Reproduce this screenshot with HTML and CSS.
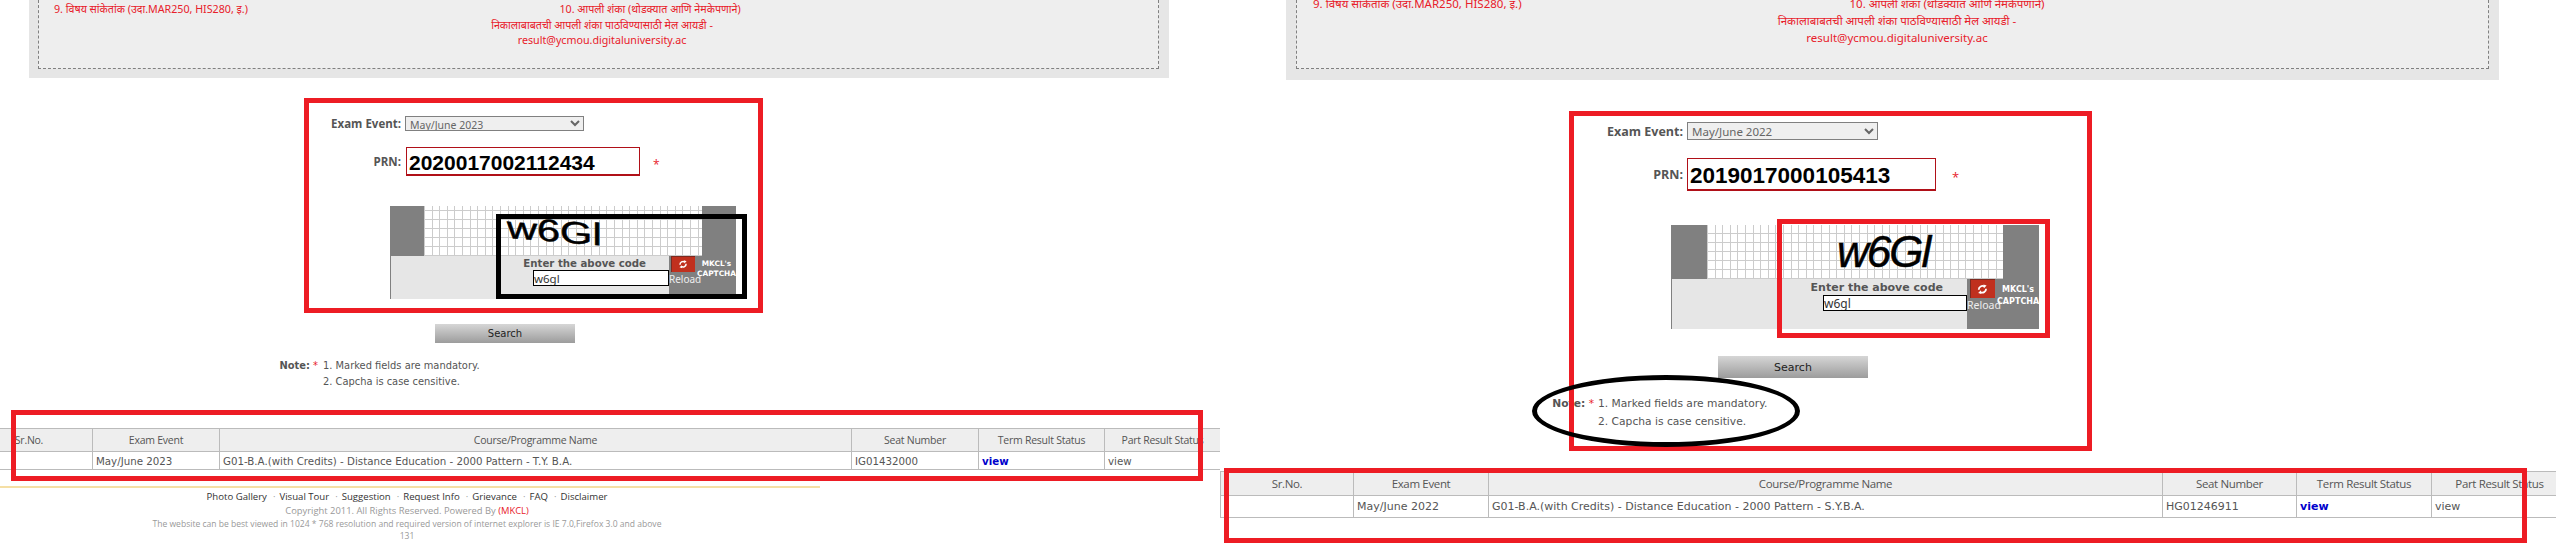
FILE: index.html
```html
<!DOCTYPE html>
<html lang="en">

<head>
    <meta charset="UTF-8">
    <meta name="viewport" content="width=device-width, initial-scale=1.0">
    <title>Exam Result Search</title>
    <link rel="stylesheet" href="styles.css">
</head>

<body>
    <!-- First screenshot -->
    <div class="shot shot-left">
        <div class="notice">
            <div class="notice-inner">
                <div class="notice-a">9. विषय सांकेतांक (उदा.MAR250, HIS280, इ.)</div>
                <div class="notice-b">
                    <div class="shift">10. आपली शंका (थोडक्यात आणि नेमकेपणाने)</div>
                    <div>निकालाबाबतची आपली शंका पाठविण्यासाठी मेल आयडी -</div>
                    <div>result@ycmou.digitaluniversity.ac</div>
                </div>
            </div>
        </div>

        <form class="search-form">
            <div class="form-row row-event">
                <label class="form-label">Exam Event:</label>
                <select class="event-select"><option>May/June 2023</option></select>
            </div>
            <div class="form-row row-prn">
                <label class="form-label label-prn">PRN:</label>
                <input class="prn-input" type="text" value="2020017002112434">
                <span class="star">*</span>
            </div>

            <div class="captcha">
                <div class="captcha-top">
                    <div class="captcha-side"></div>
                    <div class="captcha-grid"><span class="captcha-word">w6Gl</span></div>
                    <div class="captcha-side"></div>
                </div>
                <div class="captcha-bottom">
                    <div class="captcha-entry">
                        <div class="captcha-title">Enter the above code</div>
                        <input class="captcha-input" type="text" value="w6gl">
                    </div>
                    <div class="captcha-brand">
                        <div class="reload">
                            <div class="reload-icon">
                                <svg viewBox="0 0 24 24"><path d="M5 13a7 7 0 0 1 11-6" /><path d="M19 11a7 7 0 0 1-11 6" /><polygon points="14,3 20,5 15,10" /><polygon points="10,21 4,19 9,14" /></svg>
                            </div>
                            <div class="reload-text">Reload</div>
                        </div>
                        <div class="brand-text">
                            <div>MKCL's</div>
                            <div>CAPTCHA</div>
                        </div>
                    </div>
                </div>
            </div>

            <button class="search-btn" type="button">Search</button>

            <div class="note">
                <div class="note-head"><b>Note:</b> <span class="star">*</span></div>
                <div>
                    <div>1. Marked fields are mandatory.</div>
                    <div>2. Capcha is case censitive.</div>
                </div>
            </div>
        </form>

        <table class="result-table">
            <colgroup>
                <col class="col-sr"><col class="col-event"><col class="col-course"><col class="col-seat"><col class="col-term"><col class="col-part">
            </colgroup>
            <tr>
                <th>Sr.No.</th>
                <th>Exam Event</th>
                <th>Course/Programme Name</th>
                <th>Seat Number</th>
                <th>Term Result Status</th>
                <th>Part Result Status</th>
            </tr>
            <tr>
                <td></td>
                <td>May/June 2023</td>
                <td>G01-B.A.(with Credits) - Distance Education - 2000 Pattern - T.Y. B.A.</td>
                <td>IG01432000</td>
                <td><a class="view-link" href="#">view</a></td>
                <td>view</td>
            </tr>
        </table>

        <div class="footer">
            <div class="footer-rule"></div>
            <ul class="footer-links">
                <li>Photo Gallery</li>
                <li>Visual Tour</li>
                <li>Suggestion</li>
                <li>Request Info</li>
                <li>Grievance</li>
                <li>FAQ</li>
                <li>Disclaimer</li>
            </ul>
            <div class="footer-line footer-copy">Copyright 2011. All Rights Reserved. Powered By <span class="mkcl">(MKCL)</span></div>
            <div class="footer-line">The website can be best viewed in 1024 * 768 resolution and required version of internet explorer is IE 7.0,Firefox 3.0 and above</div>
            <div class="footer-line">131</div>
        </div>

        <!-- hand drawn marks -->
        <div class="mark mark-form"></div>
        <div class="mark mark-captcha"></div>
        <div class="mark mark-table"></div>
    </div>

    <!-- Second screenshot -->
    <div class="shot shot-right">
        <div class="notice">
            <div class="notice-inner">
                <div class="notice-a">9. विषय सांकेतांक (उदा.MAR250, HIS280, इ.)</div>
                <div class="notice-b">
                    <div class="shift">10. आपली शंका (थोडक्यात आणि नेमकेपणाने)</div>
                    <div>निकालाबाबतची आपली शंका पाठविण्यासाठी मेल आयडी -</div>
                    <div>result@ycmou.digitaluniversity.ac</div>
                </div>
            </div>
        </div>

        <form class="search-form">
            <div class="form-row row-event">
                <label class="form-label">Exam Event:</label>
                <select class="event-select"><option>May/June 2022</option></select>
            </div>
            <div class="form-row row-prn">
                <label class="form-label label-prn">PRN:</label>
                <input class="prn-input" type="text" value="2019017000105413">
                <span class="star">*</span>
            </div>

            <div class="captcha">
                <div class="captcha-top">
                    <div class="captcha-side"></div>
                    <div class="captcha-grid"><span class="captcha-word">w6Gl</span></div>
                    <div class="captcha-side"></div>
                </div>
                <div class="captcha-bottom">
                    <div class="captcha-entry">
                        <div class="captcha-title">Enter the above code</div>
                        <input class="captcha-input" type="text" value="w6gl">
                    </div>
                    <div class="captcha-brand">
                        <div class="reload">
                            <div class="reload-icon">
                                <svg viewBox="0 0 24 24"><path d="M5 13a7 7 0 0 1 11-6" /><path d="M19 11a7 7 0 0 1-11 6" /><polygon points="14,3 20,5 15,10" /><polygon points="10,21 4,19 9,14" /></svg>
                            </div>
                            <div class="reload-text">Reload</div>
                        </div>
                        <div class="brand-text">
                            <div>MKCL's</div>
                            <div>CAPTCHA</div>
                        </div>
                    </div>
                </div>
            </div>

            <button class="search-btn" type="button">Search</button>

            <div class="note">
                <div class="note-head"><b>Note:</b> <span class="star">*</span></div>
                <div>
                    <div>1. Marked fields are mandatory.</div>
                    <div>2. Capcha is case censitive.</div>
                </div>
            </div>
        </form>

        <table class="result-table">
            <colgroup>
                <col class="col-sr"><col class="col-event"><col class="col-course"><col class="col-seat"><col class="col-term"><col class="col-part">
            </colgroup>
            <tr>
                <th>Sr.No.</th>
                <th>Exam Event</th>
                <th>Course/Programme Name</th>
                <th>Seat Number</th>
                <th>Term Result Status</th>
                <th>Part Result Status</th>
            </tr>
            <tr>
                <td></td>
                <td>May/June 2022</td>
                <td>G01-B.A.(with Credits) - Distance Education - 2000 Pattern - S.Y.B.A.</td>
                <td>HG01246911</td>
                <td><a class="view-link" href="#">view</a></td>
                <td>view</td>
            </tr>
        </table>

        <!-- hand drawn marks -->
        <div class="mark mark-form"></div>
        <div class="mark mark-captcha"></div>
        <div class="mark mark-table"></div>
        <div class="mark mark-ellipse"></div>
    </div>
</body>

</html>
```

FILE: styles.css
```css
body {
    margin: 0;
    height: 549px;
    overflow: hidden;
    background-color: white;
    color: #555;
    font-family: "Open Sans", "Noto Sans", sans-serif;
    display: flex;
}

.shot {
    position: relative;
    flex: none;
    height: 549px;
    overflow: hidden;
}

.shot-left {
    width: 1220px;
}

.shot-right {
    width: 1336px;
}

/* Grey notice panel */
.notice {
    background: #e6e6e6;
    box-sizing: border-box;
    overflow: hidden;
}

.notice-inner {
    display: flex;
    box-sizing: border-box;
    background: #eeeeee;
    border: 1px dashed #808080;
    border-top: none;
    color: #e8202a;
    font-family: "Noto Sans", "Open Sans", sans-serif;
}

.notice-b {
    width: 400px;
    text-align: center;
}

.shot-left .notice {
    width: 1140px;
    height: 78px;
    margin-left: 29px;
    padding: 0 10px 9px 9px;
}

.shot-left .notice-inner {
    height: 69px;
    font-size: 10.7px;
    line-height: 15.5px;
    padding-top: 2px;
}

.shot-left .notice-a {
    width: 348px;
    padding-left: 15px;
}

.shot-left .shift {
    margin-left: 96px;
}

.shot-right .notice {
    width: 1213px;
    height: 80px;
    margin-left: 66px;
    padding: 0 10px 11px 10px;
}

.shot-right .notice-inner {
    height: 69px;
    font-size: 11.5px;
    line-height: 17px;
}

.shot-right .notice-a {
    width: 384px;
    padding-left: 16px;
    margin-top: -5px;
}

.shot-right .notice-b {
    margin-top: -5px;
}

.shot-right .shift {
    margin-left: 100px;
}

/* Search form */
.form-row {
    display: flex;
    align-items: center;
}

.form-label {
    font-weight: bold;
    text-align: right;
    box-sizing: border-box;
}

.event-select {
    box-sizing: border-box;
    padding: 0;
    background: #efefef;
    border: 1px solid #808080;
    color: #666;
    font-family: "Noto Sans", sans-serif;
}

.prn-input {
    box-sizing: border-box;
    padding: 3px 2px 0;
    border: 1px solid #b01018;
    border-bottom-width: 2px;
    color: black;
    font-family: "Liberation Sans", sans-serif;
    font-weight: bold;
    outline: none;
}

.star {
    color: #e8202a;
}

.row-prn .star {
    margin-top: 5px;
}

.captcha-top {
    display: flex;
}

.captcha-side {
    background: #808080;
    flex: none;
}

.captcha-grid {
    flex: 1;
    display: flex;
    align-items: center;
    overflow: hidden;
    background-color: white;
    background-image:
        repeating-linear-gradient(90deg, #cccccc 0, #cccccc 1px, transparent 1px, transparent 7.6px),
        repeating-linear-gradient(0deg, #cccccc 0, #cccccc 1px, transparent 1px, transparent 9px);
}

.captcha-word {
    display: inline-block;
    color: black;
    font-family: "Liberation Sans", sans-serif;
    line-height: 1;
    -webkit-text-stroke: 0.5px black;
}

.captcha-bottom {
    display: flex;
    background: #e6e6e6;
    border-left: 1px solid #808080;
}

.captcha-entry {
    flex: 1;
    display: flex;
    flex-direction: column;
    align-items: flex-end;
}

.captcha-title {
    font-family: "DejaVu Sans", sans-serif;
    font-weight: bold;
    white-space: nowrap;
}

.captcha-input {
    box-sizing: border-box;
    padding: 0;
    border: 1px solid black;
    color: #333;
    font-family: "Noto Sans", sans-serif;
    outline: none;
}

.captcha-brand {
    display: flex;
    flex: none;
    background: #808080;
    color: white;
}

.reload {
    text-align: center;
}

.reload-icon {
    margin: 0 auto;
    background: #c0301e;
    display: flex;
    align-items: center;
    justify-content: center;
    box-sizing: border-box;
    border-left: 1px solid #7c2a20;
    border-top: 1px solid #7c2a20;
}

.reload-icon svg {
    width: 70%;
    height: 70%;
    fill: white;
}

.reload-icon path {
    fill: none;
    stroke: white;
    stroke-width: 3.4;
}

.reload-text {
    color: #eeeeee;
    font-family: "Noto Sans", sans-serif;
    white-space: nowrap;
}

.brand-text {
    flex: 1;
    text-align: center;
    font-family: "DejaVu Sans", sans-serif;
    font-weight: bold;
    white-space: nowrap;
}

.search-btn {
    display: block;
    padding: 0;
    border: none;
    color: #222;
    background: linear-gradient(#d6d6d6, #9c9c9c);
    font-family: "DejaVu Sans", sans-serif;
}

.note {
    display: flex;
    font-family: "DejaVu Sans", sans-serif;
}

.note-head {
    text-align: right;
    white-space: nowrap;
}

/* Left screenshot form sizes */
.shot-left .search-form {
    padding-top: 38px;
}

.shot-left .row-event {
    height: 15px;
}

.shot-left .form-label {
    width: 403px;
    font-size: 11.5px;
    padding-right: 2px;
}

.shot-left .event-select {
    width: 179px;
    height: 15px;
    margin-left: 2px;
    font-size: 10.5px;
}

.shot-left .row-prn {
    height: 29px;
    margin-top: 16px;
}

.shot-left .prn-input {
    width: 234px;
    height: 29px;
    margin-left: 3px;
    font-size: 21px;
}

.shot-left .row-prn .star {
    margin-left: 13px;
    font-size: 12px;
}

.shot-left .captcha {
    width: 346px;
    margin: 30px 0 0 390px;
}

.shot-left .captcha-top {
    height: 50px;
}

.shot-left .captcha-side {
    width: 34px;
}

.shot-left .captcha-word {
    padding-left: 83px;
    font-size: 31px;
    transform: translateY(-4px) scaleX(1.34) skewY(6deg);
    transform-origin: 83px 50%;
}

.shot-left .captcha-bottom {
    height: 43px;
}

.shot-left .captcha-entry {
    padding-top: 1px;
}

.shot-left .captcha-title {
    font-size: 10.2px;
    margin-right: 23px;
    line-height: 13px;
}

.shot-left .captcha-input {
    width: 136px;
    height: 16px;
    font-size: 11.5px;
}

.shot-left .captcha-brand {
    width: 67px;
}

.shot-left .reload {
    width: 28px;
}

.shot-left .reload-icon {
    width: 24px;
    height: 16px;
}

.shot-left .reload-text {
    font-size: 10px;
    line-height: 14px;
}

.shot-left .brand-text {
    font-size: 7.4px;
    line-height: 10px;
    padding-top: 3px;
}

.shot-left .search-btn {
    width: 140px;
    height: 19px;
    margin: 25px 0 0 435px;
    font-size: 10px;
}

.shot-left .note {
    margin: 15px 0 0 0;
    font-size: 9.9px;
    line-height: 16px;
}

.shot-left .note-head {
    width: 318px;
    margin-right: 5px;
}

/* Right screenshot form sizes */
.shot-right .search-form {
    padding-top: 42px;
}

.shot-right .row-event {
    height: 18px;
}

.shot-right .form-label {
    width: 465px;
    font-size: 12.5px;
    padding-right: 2px;
}

.shot-right .event-select {
    width: 191px;
    height: 18px;
    margin-left: 2px;
    font-size: 11.5px;
}

.shot-right .row-prn {
    height: 33px;
    margin-top: 18px;
}

.shot-right .prn-input {
    width: 249px;
    height: 33px;
    margin-left: 2px;
    padding-top: 4px;
    font-size: 22.5px;
}

.shot-right .row-prn .star {
    margin-left: 16px;
    font-size: 13px;
}

.shot-right .captcha {
    width: 368px;
    margin: 34px 0 0 451px;
}

.shot-right .captcha-top {
    height: 54px;
}

.shot-right .captcha-side {
    width: 36px;
}

.shot-right .captcha-word {
    padding-left: 130px;
    font-size: 44px;
    font-style: italic;
    letter-spacing: -2px;
}

.shot-right .captcha-bottom {
    height: 50px;
}

.shot-right .captcha-entry {
    padding-top: 1px;
}

.shot-right .captcha-title {
    font-size: 11px;
    margin-right: 24px;
    line-height: 15px;
}

.shot-right .captcha-input {
    width: 144px;
    height: 16px;
    font-size: 12px;
}

.shot-right .captcha-brand {
    width: 72px;
}

.shot-right .reload {
    width: 30px;
}

.shot-right .reload-icon {
    width: 25px;
    height: 19px;
}

.shot-right .reload-text {
    font-size: 10.5px;
    line-height: 14px;
}

.shot-right .brand-text {
    font-size: 8px;
    line-height: 12px;
    padding-top: 5px;
}

.shot-right .search-btn {
    width: 150px;
    height: 22px;
    margin: 27px 0 0 498px;
    font-size: 11px;
}

.shot-right .note {
    margin-top: 17px;
    font-size: 10.7px;
    line-height: 18px;
}

.shot-right .note-head {
    width: 374px;
    margin-right: 4px;
}

/* Results table */
.result-table {
    border-collapse: collapse;
    table-layout: fixed;
    font-family: "Open Sans", sans-serif;
}

.result-table th {
    background: #eeeeee;
    font-weight: normal;
    text-align: center;
    border: 1px solid #bbbbbb;
    padding: 0;
}

.result-table td {
    border: 1px solid #bbbbbb;
    padding: 0 0 0 3px;
    font-family: "DejaVu Sans", sans-serif;
}

.view-link {
    color: #0000cc;
    font-weight: bold;
    text-decoration: none;
}

.shot-left .result-table {
    width: 1255px;
    margin: 38px 0 0 -35px;
    font-size: 10.5px;
    letter-spacing: -0.25px;
}

.shot-left .result-table th {
    height: 22px;
}

.shot-left .result-table td {
    height: 17px;
    font-size: 10.25px;
    letter-spacing: 0;
}

.shot-left .col-sr { width: 127px; }
.shot-left .col-event { width: 127px; }
.shot-left .col-course { width: 632px; }
.shot-left .col-seat { width: 127px; }
.shot-left .col-term { width: 126px; }
.shot-left .col-part { width: 116px; }

.shot-right .result-table {
    width: 1347px;
    margin-top: 40px;
    font-size: 11.5px;
    letter-spacing: -0.35px;
}

.shot-right .result-table th {
    height: 23px;
}

.shot-right .result-table td {
    height: 21px;
    font-size: 11px;
    letter-spacing: 0;
}

.shot-right .col-sr { width: 133px; }
.shot-right .col-event { width: 135px; }
.shot-right .col-course { width: 674px; }
.shot-right .col-seat { width: 134px; }
.shot-right .col-term { width: 135px; }
.shot-right .col-part { width: 136px; }

/* Footer */
.footer {
    width: 814px;
    margin-top: 16px;
    text-align: center;
    color: #999;
    font-size: 8.55px;
    line-height: 12.5px;
}

.footer-rule {
    width: 820px;
    height: 2px;
    background: #f5dfa5;
    margin-bottom: 1px;
}

.footer-links {
    display: flex;
    justify-content: center;
    gap: 6px;
    list-style: none;
    margin: 0 0 1px 0;
    padding: 0;
    color: #333;
    font-size: 9.6px;
    line-height: 15px;
}

.footer-links li + li::before {
    content: "\00b7";
    color: #999;
    margin-right: 4px;
}

.footer-copy {
    font-size: 9.4px;
}

.mkcl {
    color: #e8202a;
}

/* Marks drawn over the screenshots */
.mark {
    position: absolute;
    box-sizing: border-box;
    border: 5px solid #ed1c24;
}

.shot-left .mark-form {
    left: 304px;
    top: 98px;
    width: 459px;
    height: 215px;
}

.shot-left .mark-captcha {
    left: 496px;
    top: 214px;
    width: 251px;
    height: 85px;
    border-color: black;
}

.shot-left .mark-table {
    left: 11px;
    top: 410px;
    width: 1192px;
    height: 71px;
}

.shot-right .mark-form {
    left: 349px;
    top: 111px;
    width: 523px;
    height: 340px;
}

.shot-right .mark-captcha {
    left: 557px;
    top: 219px;
    width: 273px;
    height: 119px;
}

.shot-right .mark-table {
    left: 4px;
    top: 468px;
    width: 1303px;
    height: 75px;
}

.shot-right .mark-ellipse {
    left: 312px;
    top: 375px;
    width: 268px;
    height: 72px;
    border-color: black;
    border-radius: 50%;
}
```
